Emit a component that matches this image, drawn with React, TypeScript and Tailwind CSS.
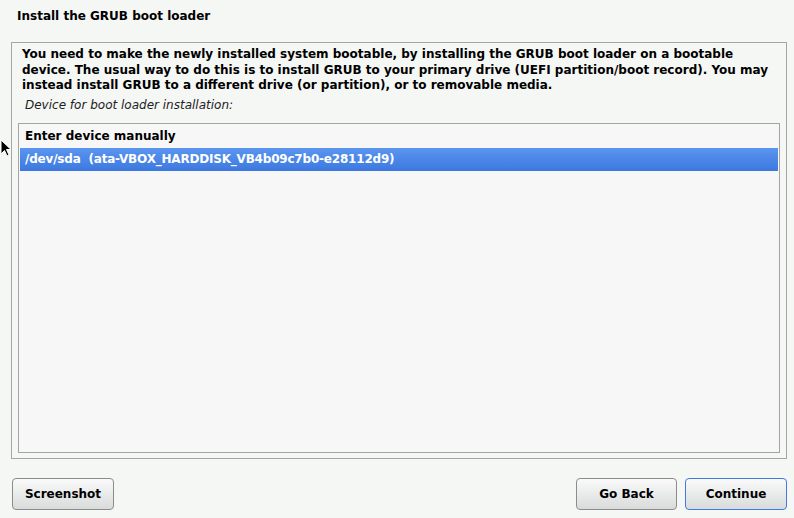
import React from "react";

const font = { fontFamily: '"DejaVu Sans", sans-serif' };

function Button({ label, focused, w }: { label: string; focused?: boolean; w: string }) {
  return (
    <button
      className={
        "h-[32px] rounded-[4px] border bg-gradient-to-b from-[#fafafa] to-[#d9dbdb] text-[12px] font-bold text-black " +
        w +
        (focused ? " border-[#3d7be0]" : " border-[#8c8c8c]")
      }
    >
      {label}
    </button>
  );
}

export default function App() {
  return (
    <div className="relative h-[518px] w-[794px] overflow-hidden bg-[#f5f7f5] text-black" style={font}>
      <div className="pl-[17px] pt-[8px] text-[12px] font-bold leading-[16px]">Install the GRUB boot loader</div>

      <div className="ml-[11px] mt-[18px] flex h-[417px] w-[776px] flex-col border border-[#a3a6a3] px-[6px] pb-[5px] pt-[4px]">
        <p className="pl-[4px] text-[12px] font-bold leading-[15.5px]">
          You need to make the newly installed system bootable, by installing the GRUB boot loader on a bootable device. The usual way to do this is to install GRUB to your primary drive (UEFI partition/boot record). You may instead install GRUB to a different drive (or partition), or to removable media.
        </p>
        <p className="mt-[3px] pl-[7px] text-[12px] italic leading-[16px] text-[#222]">Device for boot loader installation:</p>

        <div className="mt-[10px] flex-1 border border-[#a3a6a3] bg-[#f7f7f7] p-[1px]">
          <div className="h-[23px] pl-[5px] text-[12px] font-bold leading-[23px]">Enter device manually</div>
          <div className="h-[23px] bg-gradient-to-b from-[#5a95ef] to-[#3d78e0] pl-[5px] text-[12px] font-bold leading-[23px] tracking-[-0.2px] text-white">
            /dev/sda&nbsp; (ata-VBOX_HARDDISK_VB4b09c7b0-e28112d9)
          </div>
        </div>
      </div>

      <div className="mt-[19px] flex items-center pl-[12px] pr-[7px]">
        <Button label="Screenshot" w="w-[102px]" />
        <div className="flex-1" />
        <div className="flex gap-[8px]">
          <Button label="Go Back" w="w-[101px]" />
          <Button label="Continue" w="w-[102px]" focused />
        </div>
      </div>

      <svg className="absolute left-0 top-[139px]" width="12" height="20" viewBox="0 0 12 20">
        <path d="M1 1 L1 15 L4.5 11.5 L7 17 L9 16 L6.5 10.5 L11 10.5 Z" fill="black" stroke="white" strokeWidth="1" />
      </svg>
    </div>
  );
}
